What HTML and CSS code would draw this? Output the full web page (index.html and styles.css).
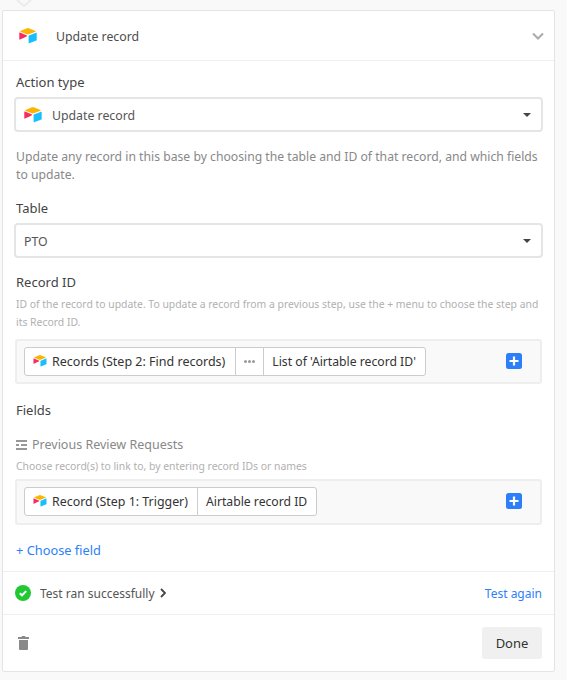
FILE: index.html
```html
<!DOCTYPE html>
<html lang="en">
<head>
    <meta charset="UTF-8">
    <meta name="viewport" content="width=device-width, initial-scale=1.0">
    <title>Update record</title>
    <link rel="stylesheet" href="styles.css">
</head>
<body>
    <svg width="567" height="0" style="display:none">
        <defs>
            <symbol id="airtable" viewBox="0 0 18 16">
                <path fill="#fcb400" d="M8 .3 1.400 3c-.3.1-.3.6 0 .7L8 6.300c.6.2 1.200.2 1.800 0l6.700-2.600c.3-.1.3-.6 0-.7L9.800.3C9.200.1 8.600.1 8 .3z"/>
                <path fill="#18bfff" d="M9.600 7.900v6.900c0 .3.300.5.600.4l7.200-2.800c.2-.1.300-.2.300-.4V5.100c0-.3-.3-.5-.6-.4l-7.200 2.800c-.2.100-.3.200-.3.400z"/>
                <path fill="#f82b60" d="M8 8.200 5.800 9.300l-.2.100L1 11.600c-.3.100-.7-.1-.7-.4V5c0-.1.100-.2.100-.3.100-.1.200-.1.300-.2.100 0 .2 0 .3 0L8 7.500c.3.100.3.500 0 .7z"/>
            </symbol>
            <symbol id="plus" viewBox="0 0 16 16">
                <rect width="16" height="16" rx="2.500" fill="#2d7ff9"/>
                <path d="M8 3.500v9M3.500 8h9" stroke="#fff" stroke-width="2.200"/>
            </symbol>
        </defs>
    </svg>

    <svg class="stem" width="16" height="7" viewBox="0 0 16 7"><path d="M1 0l7 6 7-6" fill="none" stroke="#ebebeb" stroke-width="2"/></svg>

    <div class="card">
        <div class="card-header">
            <svg class="logo" width="18" height="16"><use href="#airtable"/></svg>
            <span class="card-title">Update record</span>
            <svg class="chevron" width="12" height="8" viewBox="0 0 12 8"><path d="M1 1.500l5 5 5-5" fill="none" stroke="#aaa" stroke-width="2"/></svg>
        </div>

        <div class="card-body">
            <div class="label">Action type</div>
            <div class="select">
                <svg width="18" height="16"><use href="#airtable"/></svg>
                <span>Update record</span>
                <span class="caret"></span>
            </div>
            <p class="description">Update any record in this base by choosing the table and ID of that record, and which fields to update.</p>

            <div class="label label-table">Table</div>
            <div class="select">
                <span>PTO</span>
                <span class="caret"></span>
            </div>

            <div class="label label-record">Record ID</div>
            <p class="hint">ID of the record to update. To update a record from a previous step, use the + menu to choose the step and its Record ID.</p>
            <div class="token-box">
                <div class="tokens">
                    <div class="token token-records">
                        <svg width="14" height="12"><use href="#airtable"/></svg>
                        <span>Records (Step 2: Find records)</span>
                    </div>
                    <div class="token token-more">
                        <svg width="11" height="3" viewBox="0 0 11 3"><g fill="#999"><circle cx="1.500" cy="1.500" r="1.500"/><circle cx="5.500" cy="1.500" r="1.500"/><circle cx="9.500" cy="1.500" r="1.500"/></g></svg>
                    </div>
                    <div class="token token-plain">List of 'Airtable record ID'</div>
                </div>
                <svg class="add" width="16" height="16"><use href="#plus"/></svg>
            </div>

            <div class="label label-fields">Fields</div>
            <div class="field-name">
                <svg width="11" height="10" viewBox="0 0 11 10"><path d="M0 1h11M5 5h6M0 9h11M0 5h3" fill="none" stroke="#777" stroke-width="1.500"/></svg>
                <span>Previous Review Requests</span>
            </div>
            <p class="hint hint-field">Choose record(s) to link to, by entering record IDs or names</p>
            <div class="token-box token-box-field">
                <div class="tokens">
                    <div class="token token-record">
                        <svg width="14" height="12"><use href="#airtable"/></svg>
                        <span>Record (Step 1: Trigger)</span>
                    </div>
                    <div class="token token-plain">Airtable record ID</div>
                </div>
                <svg class="add" width="16" height="16"><use href="#plus"/></svg>
            </div>

            <a class="choose-field">+ Choose field</a>
        </div>

        <div class="test-row">
            <svg width="16" height="16" viewBox="0 0 16 16"><circle cx="8" cy="8" r="8" fill="#20c933"/><path d="M4.800 8.200l2.200 2.100 4.200-4.200" fill="none" stroke="#fff" stroke-width="2"/></svg>
            <span class="test-text">Test ran successfully</span>
            <svg width="6" height="10" viewBox="0 0 6 10"><path d="M1 1l4 4-4 4" fill="none" stroke="#444" stroke-width="1.800"/></svg>
            <a class="test-again">Test again</a>
        </div>

        <div class="card-footer">
            <svg width="11" height="14" viewBox="0 0 11 14"><path fill="#898989" d="M4 0h3l.5 1H11v2H0V1h3.500zM1 4h9v9a1 1 0 0 1-1 1H2a1 1 0 0 1-1-1z"/></svg>
            <button class="done">Done</button>
        </div>
    </div>
</body>
</html>
```

FILE: styles.css
```css
body {
    margin: 0;
    height: 680px;
    overflow: hidden;
    background-color: #f9f9f9;
    font-family: "Noto Sans", Arial, sans-serif;
    font-size: 13px;
    color: #444;
}
p {
    margin: 0;
}
svg {
    display: block;
    flex: none;
}
.stem {
    margin-left: 16px;
    height: 7px;
    margin-bottom: 3px;
}
.card {
    width: 551px;
    margin-left: 2px;
    height: 660px;
    background-color: #fff;
    border: 1px solid #e4e4e4;
    border-radius: 2px;
    display: flex;
    flex-direction: column;
}
.card-header {
    height: 49px;
    display: flex;
    align-items: center;
    padding: 0 10px 0 16px;
    border-bottom: 1px solid #efefef;
}
.card-title {
    margin-left: 19px;
    padding-top: 2px;
    flex: 1;
    color: #4d4d4d;
    font-size: 12.300px;
}
.card-body {
    height: 510px;
    box-sizing: border-box;
    padding: 12px 11px 0 13px;
}
.label {
    height: 18px;
    line-height: 18px;
    color: #444;
}
.select {
    height: 35px;
    box-sizing: border-box;
    margin-top: 6px;
    margin-left: -2px;
    border: 2px solid #e5e5e5;
    border-radius: 4px;
    display: flex;
    align-items: center;
    gap: 10px;
    padding: 0 10px 0 8px;
    color: #555;
    font-size: 12.300px;
}
.select span:first-of-type {
    flex: 1;
    padding-top: 2px;
}
.caret {
    flex: none;
    border-top: 4px solid #444;
    border-left: 4px solid transparent;
    border-right: 4px solid transparent;
}
.description {
    margin-top: 16px;
    line-height: 18px;
    color: #888;
    font-size: 12.200px;
}
.label-table {
    margin-top: 15px;
}
.label-record {
    margin-top: 15px;
}
.hint {
    margin-top: 4px;
    font-size: 10.400px;
    line-height: 18px;
    color: #b0b0b0;
}
.token-box {
    height: 45px;
    box-sizing: border-box;
    margin-top: 8px;
    margin-left: -1px;
    margin-right: 1px;
    background-color: #f9f9f9;
    border: 2px solid #eee;
    border-radius: 3px;
    display: flex;
    align-items: center;
    justify-content: space-between;
    padding: 0 18px 1px 7px;
}
.token-box-field {
    height: 46px;
    margin-top: 4px;
    padding-bottom: 2px;
}
.tokens {
    display: flex;
    height: 27px;
    background-color: #fff;
    border: 1px solid #ccc;
    border-radius: 3px;
}
.token {
    display: flex;
    align-items: center;
    gap: 5px;
    padding: 0 9px 0 8px;
    color: #333;
    border-left: 1px solid #ccc;
    font-size: 12.500px;
}
.token:first-child {
    border-left: none;
}
.token-records {
    padding-right: 10px;
}
.token-record {
    font-size: 12.400px;
}
.token-more {
    padding: 0 8px;
}
.token-plain {
    font-size: 12.200px;
    padding: 0 9px 0 8px;
}
.label-fields {
    margin-top: 17px;
}
.field-name {
    margin-top: 17px;
    display: flex;
    align-items: center;
    gap: 5px;
    color: #888;
    font-size: 12.500px;
}
.hint-field {
    margin-top: 4px;
}
.choose-field {
    display: block;
    margin-top: 16px;
    color: #2d7ff9;
    font-size: 12.800px;
}
.test-row {
    height: 42px;
    display: flex;
    align-items: center;
    padding: 0 12px 0 12px;
    border-top: 1px solid #efefef;
    border-bottom: 1px solid #efefef;
}
.test-text {
    margin: 0 5px 0 9px;
    font-size: 12px;
    color: #555;
}
.test-again {
    margin-left: auto;
    color: #2d7ff9;
    font-size: 12px;
}
.card-footer {
    flex: 1;
    display: flex;
    align-items: center;
    justify-content: space-between;
    padding: 0 12px 0 15px;
}
.done {
    width: 60px;
    height: 32px;
    background-color: #f0f0f0;
    border: none;
    border-radius: 3px;
    font-family: inherit;
    font-size: 13px;
    color: #333;
}
```
